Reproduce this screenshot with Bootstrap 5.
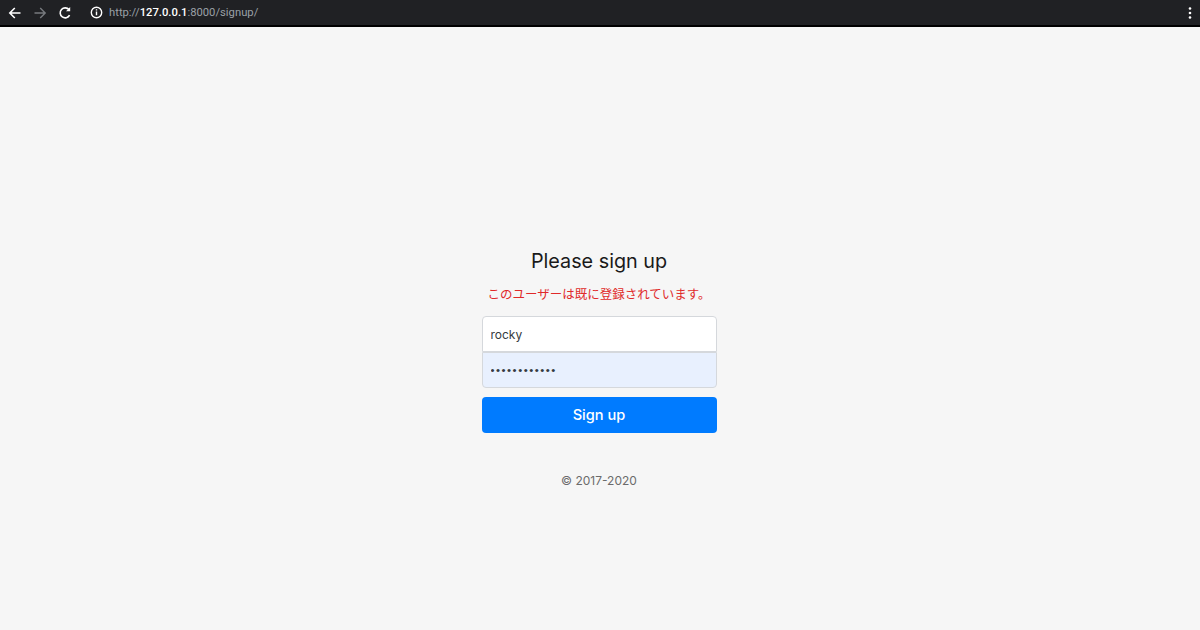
<!DOCTYPE html>
<html lang="ja">
<head>
<meta charset="utf-8">
<title>Please sign up</title>
<link href="https://cdn.jsdelivr.net/npm/bootstrap@5.3.0/dist/css/bootstrap.min.css" rel="stylesheet">
<style>
html,body{height:630px;overflow:hidden}
body{background:#f6f6f6;font-family:Inter,"Noto Sans CJK JP",sans-serif;color:#212529}
.chrome-bar{height:27px;background:#202124;border-bottom:2px solid #000}
.chrome-bar svg{display:block;flex:none}
.back-ico{margin-left:11px}
.reload-ico{margin-left:11px}
.info-ico{margin-left:18px}
.addr{font-family:Roboto,sans-serif;font-size:11.25px;color:#9aa0a6;line-height:1;margin-left:6px}
.addr b{color:#fff;font-weight:500}
.page-main{height:603px;padding:222px 2px 0 0}
.signin-box{width:235px}
.signin-title{font-size:19.8px;font-weight:400;line-height:24px;margin-bottom:12px;color:#1a1a1a;white-space:nowrap}
.signin-error{font-family:"Noto Sans CJK JP",sans-serif;font-size:12.5px;line-height:18px;color:#e02a2a;margin-bottom:13px;white-space:nowrap}
.signin-box .form-control{height:36px;font-size:12px;padding:6px 8px;border-color:#d5d8dc;color:#343a40;box-shadow:none}
.signin-box .user{border-radius:4px 4px 0 0;background:#fff}
.signin-box .pass{border-radius:0 0 4px 4px;background:#e8f0fe;letter-spacing:1.5px;font-size:11.5px;font-family:"Liberation Sans",sans-serif}
.signin-box .go{height:36px;margin-top:9px;padding:0;font-size:14.6px;line-height:37px;background:#007bff;border:0;border-radius:4px;font-weight:500}
.signin-foot{font-size:12px;line-height:18px;margin-top:39px;color:#6b6b6b}
</style>
</head>
<body>
<div class="chrome-bar d-flex align-items-center ps-2 pe-2">
  <svg width="14" height="14" viewBox="0 0 14 14" fill="none" stroke="#fff" stroke-width="1.6"><path d="M12.5 7H2M6.8 2 1.8 7l5 5"/></svg>
  <svg class="back-ico" width="14" height="14" viewBox="0 0 14 14" fill="none" stroke="#777a7e" stroke-width="1.4"><path d="M1.5 7H12M7.2 2l5 5-5 5"/></svg>
  <svg class="reload-ico" width="14" height="14" viewBox="0 0 14 14" fill="none" stroke="#fff" stroke-width="1.6"><path d="M11.6 9.2A5 5 0 1 1 11 3.6"/><path d="M12.2 1v4.2H8z" fill="#fff" stroke="none"/></svg>
  <svg class="info-ico" width="13" height="13" viewBox="0 0 13 13" fill="none"><circle cx="6.5" cy="6.5" r="5.2" stroke="#fff" stroke-width="1.4"/><path d="M6.5 5.6v3.6M6.5 3.3v1.3" stroke="#fff" stroke-width="1.4"/></svg>
  <span class="addr">http://<b>127.0.0.1</b>:8000/signup/</span>
  <svg class="ms-auto" width="4" height="14" viewBox="0 0 4 14" fill="#fff"><circle cx="2" cy="2.5" r="1.3"/><circle cx="2" cy="7" r="1.3"/><circle cx="2" cy="11.5" r="1.3"/></svg>
</div>
<main class="page-main d-flex justify-content-center">
  <form class="signin-box text-center">
    <h1 class="signin-title">Please sign up</h1>
    <p class="signin-error">このユーザーは既に登録されています。</p>
    <input class="form-control user" type="text" value="rocky" aria-label="Username">
    <input class="form-control pass" type="password" value="abcdefghijkl" aria-label="Password">
    <button class="btn btn-primary w-100 go" type="button">Sign up</button>
    <p class="signin-foot mb-0">© 2017-2020</p>
  </form>
</main>
</body>
</html>
